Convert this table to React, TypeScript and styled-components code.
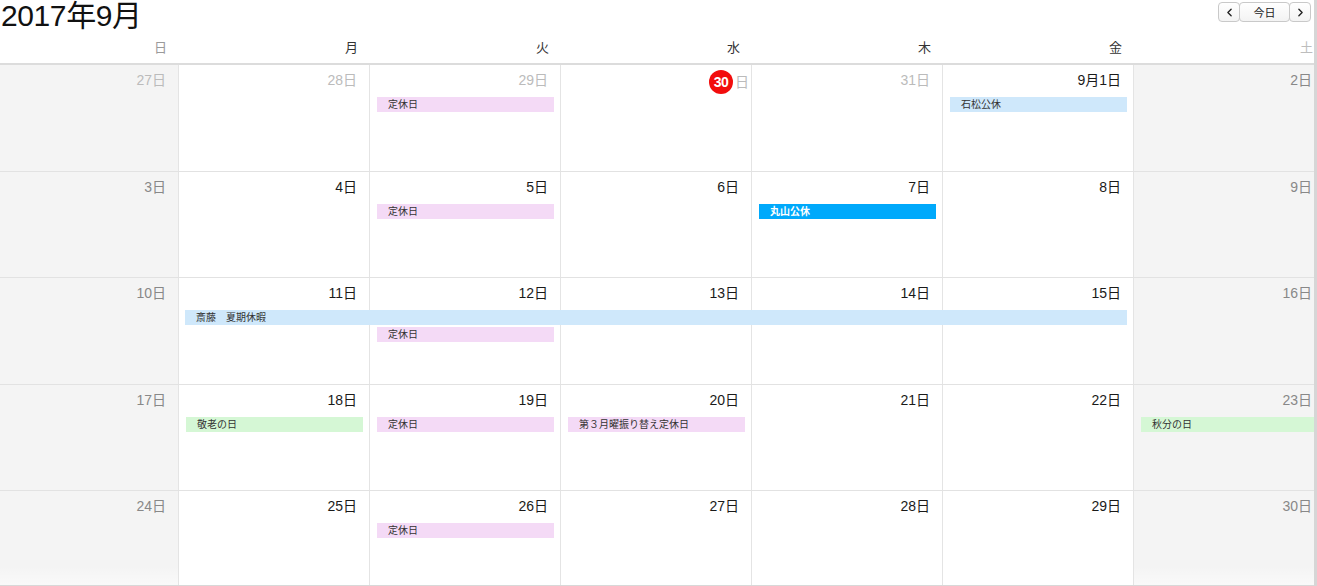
import { createGlobalStyle, styled } from 'styled-components'
import { ChevronLeft, ChevronRight } from 'lucide-react'

const GlobalStyle = createGlobalStyle`
  html, body {
    margin: 0;
    padding: 0;
    background: #fff;
    overflow: hidden;
  }
  body {
    font-family: "Liberation Sans", "Noto Sans CJK JP", sans-serif;
    color: #222;
  }
`

type Tone = 'pink' | 'blue' | 'strong' | 'green'
type Kind = 'other' | 'weekend' | 'normal'

interface Day {
  label: string
  kind: Kind
  today?: boolean
}

interface CalEvent {
  col: number
  span?: number
  slot?: number
  text: string
  tone: Tone
}

interface Week {
  days: Day[]
  events: CalEvent[]
}

const COL = 191

const Page = styled.div`
  width: 1314px;
  height: 100vh;
  overflow: hidden;
  border-right: 3px solid #d6d6d6;
  display: flex;
  flex-direction: column;
`

const Toolbar = styled.div`
  display: flex;
  justify-content: space-between;
  align-items: flex-start;
  height: 33px;
  padding: 0 3px 0 1px;
`

const Title = styled.h2`
  margin: 0;
  font-size: 30px;
  line-height: 31px;
  font-weight: normal;
  color: #111;
  letter-spacing: -0.4px;
`

const ButtonGroup = styled.div`
  display: flex;
  margin-top: 2px;
`

const NavButton = styled.button<{ $wide?: boolean }>`
  box-sizing: border-box;
  height: 20px;
  width: ${p => (p.$wide ? '51px' : '22px')};
  margin-left: -1px;
  padding: 0;
  border: 1px solid #c9c9c9;
  border-radius: 4px;
  background: linear-gradient(#fff, #f3f3f3);
  color: #222;
  font-family: inherit;
  font-size: 11px;
  display: flex;
  align-items: center;
  justify-content: center;
`

const Calendar = styled.div`
  margin-left: -12px;
  width: ${COL * 7}px;
  flex: 1;
  display: flex;
  flex-direction: column;
`

const HeadRow = styled.div`
  display: grid;
  grid-template-columns: repeat(7, ${COL}px);
  height: 30px;
  border-bottom: 2px solid #dcdcdc;
`

const HeadCell = styled.div<{ $tone: 'sun' | 'sat' | 'day' }>`
  text-align: right;
  padding-right: 12px;
  line-height: 30px;
  font-size: 13px;
  color: ${p => (p.$tone === 'sun' ? '#9a9a9a' : p.$tone === 'sat' ? '#bdbdbd' : '#333')};
`

const Weeks = styled.div`
  flex: 1;
  display: grid;
  grid-template-rows: repeat(4, 106.5px) 1fr;
  border-bottom: 1px solid #d8d8d8;
`

const WeekRow = styled.div<{ $last?: boolean }>`
  display: grid;
  grid-template-columns: repeat(7, ${COL}px);
  grid-template-rows: 32px 17px 17px 1fr;
  border-bottom: ${p => (p.$last ? 'none' : '1px solid #e2e2e2')};
  box-sizing: border-box;
  min-height: 0;
`

const Cell = styled.div<{ $weekend: boolean; $col: number; $last?: boolean }>`
  grid-row: 1 / -1;
  grid-column: ${p => p.$col};
  border-right: 1px solid #e4e4e4;
  background: ${p => (p.$weekend ? '#f4f4f4' : '#fff')};
  ${p => (p.$last ? 'background-image: linear-gradient(to bottom, transparent 80%, rgba(255,255,255,0.5));' : '')}
  display: flex;
  justify-content: flex-end;
  align-items: flex-start;
  padding: 5px 12px 0 0;
  min-height: 0;
`

const DayNum = styled.span<{ $kind: Kind; $today?: boolean }>`
  font-size: 14px;
  line-height: 20px;
  color: ${p => (p.$kind === 'other' ? '#bbb' : p.$kind === 'weekend' ? '#888' : '#1a1a1a')};
  display: flex;
  align-items: center;
  margin-right: ${p => (p.$today ? '-10px' : '0')};
`

const TodayBadge = styled.span`
  display: inline-flex;
  align-items: center;
  justify-content: center;
  width: 24px;
  height: 24px;
  border-radius: 50%;
  background: #f20d0d;
  color: #fff;
  font-weight: bold;
  font-size: 14px;
  letter-spacing: -0.5px;
  margin-right: 2px;
`

const toneColor: Record<Tone, string> = {
  pink: '#f4daf6',
  blue: '#cfe8fb',
  strong: '#00a9fb',
  green: '#d5f7d5',
}

const EventBar = styled.div<{ $tone: Tone; $col: number; $span: number; $slot: number }>`
  grid-column: ${p => p.$col} / span ${p => p.$span};
  grid-row: ${p => p.$slot};
  align-self: start;
  height: 15px;
  margin: 0 7px 0 ${p => (p.$span > 1 ? 6 : 7)}px;
  padding-left: 11px;
  background: ${p => toneColor[p.$tone]};
  color: ${p => (p.$tone === 'strong' ? '#fff' : '#333')};
  font-weight: ${p => (p.$tone === 'strong' ? 'bold' : 'normal')};
  font-size: 10px;
  line-height: 15px;
  white-space: nowrap;
  overflow: hidden;
  z-index: 1;
`

const d = (label: string, kind: Kind = 'normal', today = false): Day => ({ label, kind, today })

const weeks: Week[] = [
  {
    days: [d('27日', 'other'), d('28日', 'other'), d('29日', 'other'), d('30', 'other', true), d('31日', 'other'), d('9月1日'), d('2日', 'weekend')],
    events: [
      { col: 2, text: '定休日', tone: 'pink' },
      { col: 5, text: '石松公休', tone: 'blue' },
    ],
  },
  {
    days: [d('3日', 'weekend'), d('4日'), d('5日'), d('6日'), d('7日'), d('8日'), d('9日', 'weekend')],
    events: [
      { col: 2, text: '定休日', tone: 'pink' },
      { col: 4, text: '丸山公休', tone: 'strong' },
    ],
  },
  {
    days: [d('10日', 'weekend'), d('11日'), d('12日'), d('13日'), d('14日'), d('15日'), d('16日', 'weekend')],
    events: [
      { col: 1, span: 5, text: '斎藤　夏期休暇', tone: 'blue' },
      { col: 2, slot: 1, text: '定休日', tone: 'pink' },
    ],
  },
  {
    days: [d('17日', 'weekend'), d('18日'), d('19日'), d('20日'), d('21日'), d('22日'), d('23日', 'weekend')],
    events: [
      { col: 1, text: '敬老の日', tone: 'green' },
      { col: 2, text: '定休日', tone: 'pink' },
      { col: 3, text: '第３月曜振り替え定休日', tone: 'pink' },
      { col: 6, text: '秋分の日', tone: 'green' },
    ],
  },
  {
    days: [d('24日', 'weekend'), d('25日'), d('26日'), d('27日'), d('28日'), d('29日'), d('30日', 'weekend')],
    events: [{ col: 2, text: '定休日', tone: 'pink' }],
  },
]

const headers = ['日', '月', '火', '水', '木', '金', '土']

const App = () => {
  return (
    <Page>
      <GlobalStyle />
      <Toolbar>
        <Title>2017年9月</Title>
        <ButtonGroup>
          <NavButton>
            <ChevronLeft size={13} strokeWidth={2.5} />
          </NavButton>
          <NavButton $wide>今日</NavButton>
          <NavButton>
            <ChevronRight size={13} strokeWidth={2.5} />
          </NavButton>
        </ButtonGroup>
      </Toolbar>
      <Calendar>
        <HeadRow>
          {headers.map((h, i) => (
            <HeadCell key={h} $tone={i === 0 ? 'sun' : i === 6 ? 'sat' : 'day'}>
              {h}
            </HeadCell>
          ))}
        </HeadRow>
        <Weeks>
          {weeks.map((w, wi) => (
            <WeekRow key={wi} $last={wi === weeks.length - 1}>
              {w.days.map((day, i) => (
                <Cell key={i} $col={i + 1} $weekend={i === 0 || i === 6} $last={wi === weeks.length - 1}>
                  <DayNum $kind={day.kind} $today={day.today}>
                    {day.today ? (
                      <>
                        <TodayBadge>{day.label}</TodayBadge>日
                      </>
                    ) : (
                      day.label
                    )}
                  </DayNum>
                </Cell>
              ))}
              {w.events.map((ev, ei) => (
                <EventBar
                  key={ei}
                  $tone={ev.tone}
                  $col={ev.col + 1}
                  $span={ev.span ?? 1}
                  $slot={(ev.slot ?? 0) + 2}
                >
                  {ev.text}
                </EventBar>
              ))}
            </WeekRow>
          ))}
        </Weeks>
      </Calendar>
    </Page>
  )
}

export default App
